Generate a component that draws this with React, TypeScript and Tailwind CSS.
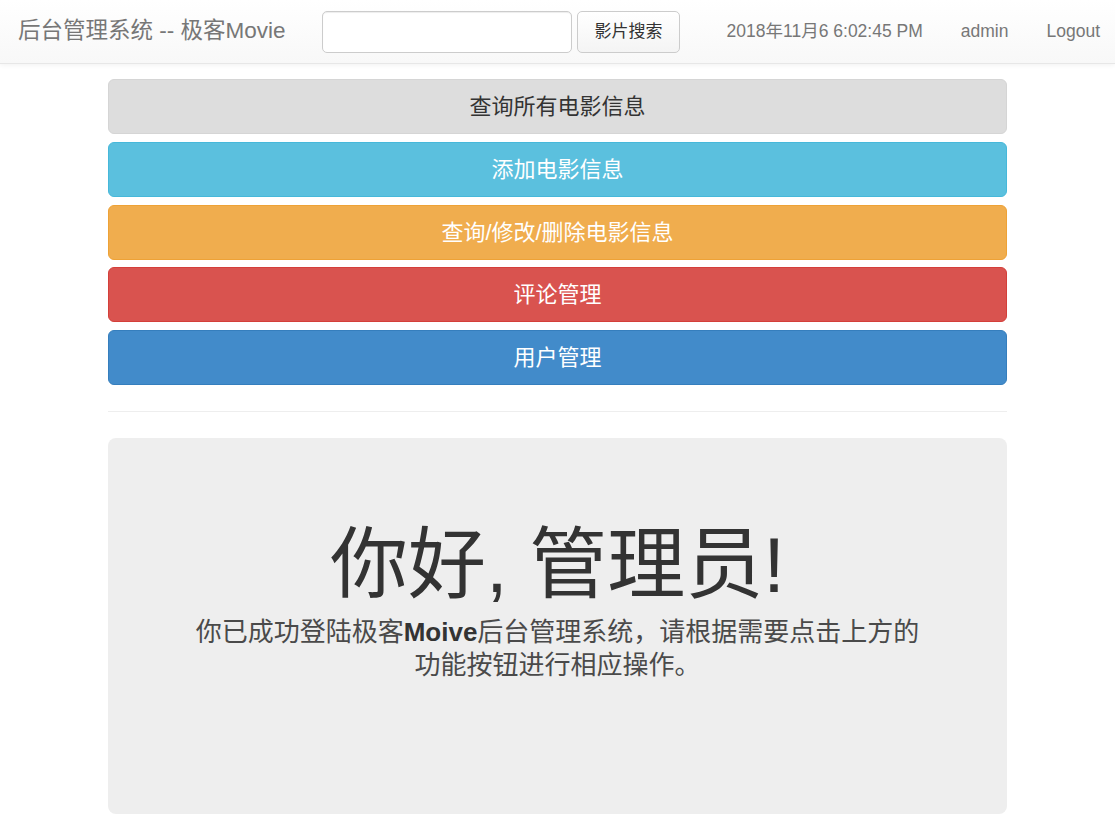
const buttons = [
  { label: '查询所有电影信息', cls: 'bg-[#dddddd] border-[#d5d5d5] text-[#333333]' },
  { label: '添加电影信息', cls: 'bg-[#5bc0de] border-[#46b8da] text-white' },
  { label: '查询/修改/删除电影信息', cls: 'bg-[#f0ad4e] border-[#eea236] text-white' },
  { label: '评论管理', cls: 'bg-[#d9534f] border-[#d43f3a] text-white' },
  { label: '用户管理', cls: 'bg-[#428bca] border-[#357ebd] text-white' },
];

const font = "font-['Liberation_Sans','Noto_Sans_CJK_SC',sans-serif]";

export default function App() {
  return (
    <div className={`min-h-screen bg-white ${font}`}>
      {/* navbar */}
      <div className="h-[64px] flex items-center bg-gradient-to-b from-white to-[#f8f8f8] border-b border-[#e7e7e7] shadow-[0_1px_5px_rgba(0,0,0,0.06)]">
        <div className="pl-[18px] w-[322px] text-[22.5px] text-[#777777] leading-none">后台管理系统 -- 极客Movie</div>
        <input className="w-[250px] h-[42px] rounded-[5px] border border-[#cccccc] bg-white shadow-[inset_0_1px_1px_rgba(0,0,0,0.075)] outline-none" />
        <button className="ml-[5px] w-[103px] h-[42px] rounded-[5px] border border-[#cccccc] bg-gradient-to-b from-white to-[#f4f4f4] text-[17px] text-[#333333]">
          影片搜索
        </button>
        <div className="ml-auto flex items-center text-[17.5px] text-[#777777] pr-[15px]">
          <span className="mr-[38px]">2018年11月6 6:02:45 PM</span>
          <span className="mr-[38px]">admin</span>
          <span>Logout</span>
        </div>
      </div>

      {/* content */}
      <div className="w-[899px] ml-[108px] pt-[15px]">
        <div className="flex flex-col gap-[7.75px]">
          {buttons.map((b) => (
            <div
              key={b.label}
              className={`h-[55px] rounded-[6px] border flex items-center justify-center text-[22px] ${b.cls}`}
            >
              {b.label}
            </div>
          ))}
        </div>

        <div className="mt-[26px] border-t border-[#eeeeee]" />

        <div className="mt-[26px] h-[376px] rounded-[8px] bg-[#eeeeee] px-[75px] pt-[82px] text-center">
          <div className="text-[78px] leading-[90px] text-[#333333]">你好, 管理员!</div>
          <p className="mt-[6px] text-[26px] leading-[33px] text-[#4a4a4a]">
            你已成功登陆极客<b className="text-[#333333]">Moive</b>后台管理系统，请根据需要点击上方的功能按钮进行相应操作。
          </p>
        </div>
      </div>
    </div>
  );
}
